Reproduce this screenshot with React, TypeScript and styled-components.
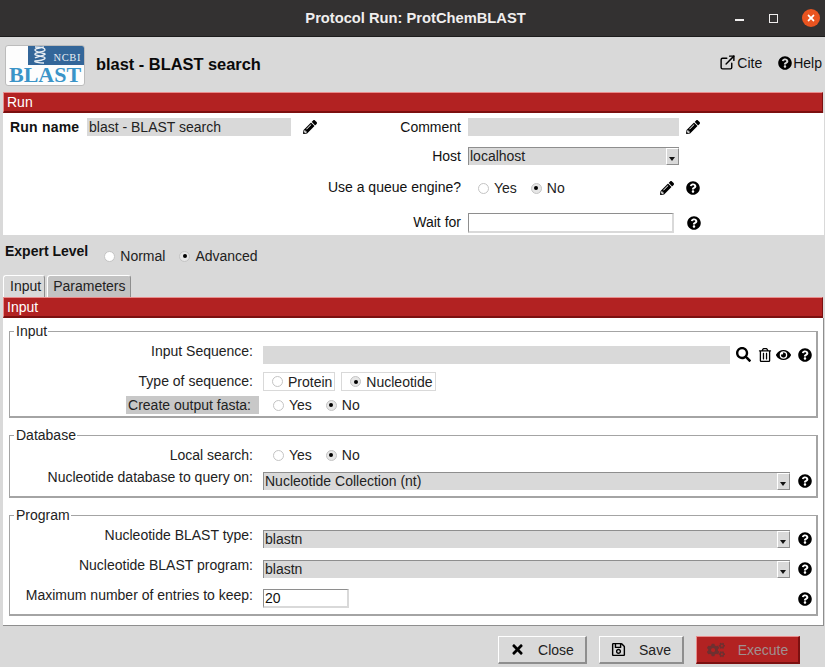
import React from "react";
import styled, { createGlobalStyle } from "styled-components";
import {
  FaPencilAlt,
  FaQuestionCircle,
  FaSearch,
  FaRegTrashAlt,
  FaEye,
  FaTimes,
  FaRegSave,
  FaCogs,
} from "react-icons/fa";
import { ExternalLink } from "lucide-react";

const GlobalStyle = createGlobalStyle`
  html, body { margin: 0; padding: 0; background: #d9d9d9; }
  * { box-sizing: border-box; }
  body { font-family: "Liberation Sans", Arial, sans-serif; font-size: 14px; color: #111; }
`;

const Window = styled.div`
  width: 825px;
  height: 667px;
  overflow: hidden;
  background: #d9d9d9;
`;

const TitleBar = styled.div`
  height: 37px;
  padding-left: 6px;
  background: #333131;
  border-bottom: 1px solid #1d1c1c;
  color: #f0eeee;
  font-weight: bold;
  font-size: 14.7px;
  display: flex;
  align-items: center;
  justify-content: center;
  position: relative;
`;

const WindowButtons = styled.div`
  position: absolute;
  right: 5px;
  top: 9px;
  display: flex;
  align-items: center;
`;

const MinButton = styled.span`
  width: 9px;
  height: 2px;
  background: #f0eeee;
  margin: 4px 25px 0 0;
`;

const MaxButton = styled.span`
  width: 9px;
  height: 9px;
  border: 1px solid #f0eeee;
  margin-right: 24px;
`;

const CloseCircle = styled.span`
  width: 18px;
  height: 18px;
  border-radius: 50%;
  background: #e95420;
  display: flex;
  align-items: center;
  justify-content: center;
`;

const Header = styled.div`
  height: 55px;
  display: flex;
  align-items: center;
  padding: 0 3px 0 5px;
`;

const Logo = styled.div`
  width: 80px;
  height: 41px;
  background: #fdfdfd;
  border: 1px solid #bcbcbc;
  border-radius: 3px;
  position: relative;
  margin: 1px 11px 0 0;
  overflow: hidden;
  flex: none;
`;

const LogoBand = styled.div`
  position: absolute;
  left: 22px;
  top: 0;
  right: 0;
  height: 19px;
  background: #336699;
  display: flex;
  align-items: flex-end;
  justify-content: space-between;
  padding: 0 3px 1px 4px;
  color: #e8eef4;
  font-family: "Liberation Serif", serif;
  font-size: 10.5px;
  line-height: 12px;
  letter-spacing: 0.6px;
`;

const LogoWord = styled.div`
  position: absolute;
  left: 3px;
  top: 18px;
  color: #3a94c8;
  font-family: "Liberation Serif", serif;
  font-weight: bold;
  font-size: 22px;
  line-height: 22px;
`;

const ProtocolTitle = styled.div`
  flex: 1;
  font-weight: bold;
  font-size: 16.4px;
  color: #0a0a0a;
`;

const HeaderLink = styled.div`
  display: flex;
  align-items: center;
  gap: 1px;
  margin-left: 16px;
  margin-top: -4px;
`;

const RedBar = styled.div`
  height: 21px;
  width: 820px;
  margin-left: 3px;
  background: #b22222;
  border-top: 1px solid #e98d8d;
  border-left: 1px solid #e98d8d;
  border-bottom: 2px solid #7c1010;
  border-right: 1px solid #7c1010;
  color: #fff;
  line-height: 18px;
  padding-left: 3px;
`;

const RunPanel = styled.div`
  height: 122px;
  width: 821px;
  margin-left: 3px;
  background: #fff;
  display: flex;
`;

const RunLeft = styled.div`
  width: 378px;
  padding: 5px 0 0 7px;
  display: flex;
  align-items: flex-start;
`;

const RunNameLabel = styled.span`
  font-weight: bold;
  width: 77px;
  line-height: 18px;
  letter-spacing: 0.2px;
  flex: none;
`;

const RunRight = styled.div`
  flex: 1;
  padding-top: 5px;
  display: flex;
  flex-direction: column;
`;

const RunRow = styled.div<{ $height: number }>`
  height: ${(p) => p.$height}px;
  display: flex;
  align-items: flex-start;
`;

const RunLabel = styled.span`
  width: 80px;
  flex: none;
  margin-right: 7px;
  display: flex;
  justify-content: flex-end;
  line-height: 18px;
  white-space: nowrap;
`;

const GrayInput = styled.div<{ $width: number }>`
  height: 18px;
  width: ${(p) => p.$width}px;
  flex: none;
  background: #d9d9d9;
  line-height: 18px;
  padding-left: 2px;
  color: #222;
`;

const EntryBox = styled.div<{ $width: number; $height: number }>`
  width: ${(p) => p.$width}px;
  height: ${(p) => p.$height}px;
  background: #fff;
  border-top: 1px solid #8e8e8e;
  border-left: 1px solid #8e8e8e;
  border-right: 2px solid #d9d9d9;
  border-bottom: 2px solid #d9d9d9;
  line-height: 17px;
  padding-left: 1px;
  flex: none;
`;

const Select = styled.div<{ $width: number }>`
  width: ${(p) => p.$width}px;
  height: 18px;
  background: #d9d9d9;
  border-top: 1px solid #8e8e8e;
  border-left: 1px solid #8e8e8e;
  display: flex;
  justify-content: space-between;
  flex: none;
  line-height: 17px;
  padding-left: 1px;
  color: #222;
`;

const SelectArrow = styled.span`
  width: 13px;
  height: 17px;
  background: #d9d9d9;
  border-top: 1px solid #fff;
  border-left: 1px solid #fff;
  border-right: 1px solid #8e8e8e;
  border-bottom: 1px solid #8e8e8e;
  position: relative;
  &::after {
    content: "";
    position: absolute;
    left: 2px;
    top: 8px;
    border-left: 3.5px solid transparent;
    border-right: 3.5px solid transparent;
    border-top: 4px solid #111;
  }
`;

const IconButton = styled.span<{ $left?: number; $top?: number }>`
  display: inline-flex;
  align-items: center;
  justify-content: center;
  width: 15px;
  height: 15px;
  flex: none;
  margin-left: ${(p) => p.$left ?? 0}px;
  margin-top: ${(p) => p.$top ?? 0}px;
  color: #000;
`;

const RadioGroup = styled.div<{ $left?: number; $top?: number }>`
  display: flex;
  align-items: center;
  height: 18px;
  margin-left: ${(p) => p.$left ?? 0}px;
  margin-top: ${(p) => p.$top ?? 0}px;
`;

const RadioItem = styled.span<{ $gap?: number }>`
  display: inline-flex;
  align-items: center;
  gap: 5px;
  margin-right: ${(p) => p.$gap ?? 14}px;
  color: #222;
`;

const RadioDot = styled.span<{ $on?: boolean }>`
  width: 11px;
  height: 11px;
  border-radius: 50%;
  border: 1px solid #c4c4c4;
  background: ${(p) => (p.$on ? "#e6e6e6" : "#fff")};
  position: relative;
  flex: none;
  &::after {
    content: "";
    display: ${(p) => (p.$on ? "block" : "none")};
    position: absolute;
    left: 2.5px;
    top: 2.5px;
    width: 4px;
    height: 4px;
    border-radius: 50%;
    background: #000;
  }
`;

const ExpertRow = styled.div`
  height: 38px;
  display: flex;
  align-items: flex-start;
  padding: 8px 0 0 5px;
`;

const ExpertLabel = styled.span`
  font-weight: bold;
  line-height: 17px;
  margin-right: 13px;
`;

const TabRow = styled.div`
  height: 24px;
  display: flex;
  gap: 2px;
  padding-left: 3px;
  align-items: flex-end;
`;

const Tab = styled.div<{ $active?: boolean }>`
  height: 22px;
  background: ${(p) => (p.$active ? "#d9d9d9" : "#c3c3c3")};
  border: 1px solid #8e8e8e;
  border-top-color: #fff;
  border-left-color: #fff;
  border-bottom: none;
  border-radius: 3px 3px 0 0;
  padding: ${(p) => (p.$active ? "0 3px 0 6px" : "0 4px 0 5px")};
  line-height: 20px;
  color: #222;
`;

const MainPanel = styled.div`
  margin-left: 3px;
  width: 821px;
  height: 308px;
  background: #fff;
  border-right: 1px solid #8e8e8e;
  border-bottom: 1px solid #8e8e8e;
  padding: 5px 0 0 6px;
  display: flex;
  flex-direction: column;
  gap: 9px;
`;

const Group = styled.fieldset<{ $height: number; $pad: number }>`
  margin: 0;
  flex: none;
  width: 809px;
  height: ${(p) => p.$height}px;
  padding: ${(p) => p.$pad}px 0 0;
  border: 1px solid #a4a4a4;
  border-right-width: 2px;
  border-bottom-width: 2px;
  border-radius: 0;
  min-width: 0;
`;

const GroupLegend = styled.legend`
  margin-left: 4px;
  padding: 0 1px 0 2px;
  line-height: 16px;
  color: #222;
`;

const FieldRow = styled.div<{ $height: number }>`
  height: ${(p) => p.$height}px;
  display: flex;
  align-items: flex-start;
`;

const FieldLabel = styled.div<{ $offset?: number }>`
  width: 243px;
  flex: none;
  margin-right: 10px;
  margin-top: ${(p) => p.$offset ?? 0}px;
  display: flex;
  justify-content: flex-end;
  line-height: 16px;
  color: #222;
  white-space: nowrap;
`;

const Highlighted = styled.span`
  background: #c8c8c8;
  padding: 1px 8px 1px 2px;
  margin-right: -6px;
  line-height: 16px;
`;

const BoxedRadio = styled.span`
  display: inline-flex;
  align-items: center;
  gap: 5px;
  height: 19px;
  padding: 0 2px 0 8px;
  border: 1px solid #d9d9d9;
  margin-right: 6px;
  color: #222;
`;

const Footer = styled.div`
  display: flex;
  justify-content: flex-end;
  gap: 12px;
  padding: 10px 25px 0 0;
`;

const ActionButton = styled.div<{ $width: number; $danger?: boolean }>`
  width: ${(p) => p.$width}px;
  height: 28px;
  display: flex;
  align-items: center;
  justify-content: center;
  gap: 13px;
  background: ${(p) => (p.$danger ? "#b22222" : "#d9d9d9")};
  color: ${(p) => (p.$danger ? "#a09090" : "#222")};
  border-style: solid;
  border-width: 1px 2px 2px 1px;
  border-color: ${(p) =>
    p.$danger ? "#e98d8d #7c1010 #7c1010 #e98d8d" : "#fff #8e8e8e #8e8e8e #fff"};
`;

const Help = ({ left, top }: { left?: number; top?: number }) => (
  <IconButton $left={left} $top={top}>
    <FaQuestionCircle size={14} />
  </IconButton>
);

const Pencil = ({ left, top }: { left?: number; top?: number }) => (
  <IconButton $left={left} $top={top}>
    <FaPencilAlt size={14} />
  </IconButton>
);

const Radio = ({ label, on, gap }: { label: string; on?: boolean; gap?: number }) => (
  <RadioItem $gap={gap}>
    <RadioDot $on={on} />
    {label}
  </RadioItem>
);

const App = () => {
  return (
    <Window>
      <GlobalStyle />
      <TitleBar>
        Protocol Run: ProtChemBLAST
        <WindowButtons>
          <MinButton />
          <MaxButton />
          <CloseCircle>
            <FaTimes size={10} color="#fff" />
          </CloseCircle>
        </WindowButtons>
      </TitleBar>

      <Header>
        <Logo>
          <LogoBand>
            <svg width="15" height="18" viewBox="0 0 15 18">
              <path
                d="M3 1c6 0 10 1 10 3s-9 2-10 4 10 2 10 4-7 3-10 3c-1 1 4 2 9 2M12 1C8 2 3 2 3 4s9 3 10 4-9 3-10 4"
                stroke="#e8eef4"
                strokeWidth="1.4"
                fill="none"
              />
            </svg>
            NCBI
          </LogoBand>
          <LogoWord>BLAST</LogoWord>
        </Logo>
        <ProtocolTitle>blast - BLAST search</ProtocolTitle>
        <HeaderLink>
          <ExternalLink size={17} strokeWidth={2} color="#000" />
          Cite
        </HeaderLink>
        <HeaderLink>
          <FaQuestionCircle size={14} color="#000" />
          Help
        </HeaderLink>
      </Header>

      <RedBar>Run</RedBar>
      <RunPanel>
        <RunLeft>
          <RunNameLabel>Run name</RunNameLabel>
          <GrayInput $width={204}>blast - BLAST search</GrayInput>
          <Pencil left={11} top={1} />
        </RunLeft>
        <RunRight>
          <RunRow $height={29}>
            <RunLabel>Comment</RunLabel>
            <GrayInput $width={211} />
            <Pencil left={6} top={1} />
          </RunRow>
          <RunRow $height={31}>
            <RunLabel>Host</RunLabel>
            <Select $width={211}>
              localhost
              <SelectArrow />
            </Select>
          </RunRow>
          <RunRow $height={35}>
            <RunLabel>Use a queue engine?</RunLabel>
            <RadioGroup $left={10} $top={1}>
              <Radio label="Yes" />
              <Radio label="No" on />
            </RadioGroup>
            <Pencil left={81} top={2} />
            <Help left={11} top={2} />
          </RunRow>
          <RunRow $height={22}>
            <RunLabel>Wait for</RunLabel>
            <EntryBox $width={206} $height={20} />
            <Help left={12} top={2} />
          </RunRow>
        </RunRight>
      </RunPanel>

      <ExpertRow>
        <ExpertLabel>Expert Level</ExpertLabel>
        <RadioGroup $left={3} $top={4}>
          <Radio label="Normal" />
          <Radio label="Advanced" on />
        </RadioGroup>
      </ExpertRow>

      <TabRow>
        <Tab $active>Input</Tab>
        <Tab>Parameters</Tab>
      </TabRow>
      <RedBar>Input</RedBar>

      <MainPanel>
        <Group $height={95} $pad={7}>
          <GroupLegend>Input</GroupLegend>
          <FieldRow $height={26}>
            <FieldLabel $offset={-3}>Input Sequence:</FieldLabel>
            <GrayInput $width={467} />
            <IconButton $left={6} $top={1}>
              <FaSearch size={15} />
            </IconButton>
            <IconButton $left={6} $top={1}>
              <FaRegTrashAlt size={14} />
            </IconButton>
            <IconButton $left={4} $top={1}>
              <FaEye size={16} />
            </IconButton>
            <Help left={6} top={1} />
          </FieldRow>
          <FieldRow $height={24}>
            <FieldLabel $offset={1}>Type of sequence:</FieldLabel>
            <BoxedRadio>
              <RadioDot />
              Protein
            </BoxedRadio>
            <BoxedRadio>
              <RadioDot $on />
              Nucleotide
            </BoxedRadio>
          </FieldRow>
          <FieldRow $height={18}>
            <FieldLabel>
              <Highlighted>Create output fasta:</Highlighted>
            </FieldLabel>
            <RadioGroup $left={10}>
              <Radio label="Yes" />
              <Radio label="No" on />
            </RadioGroup>
          </FieldRow>
        </Group>

        <Group $height={71} $pad={3}>
          <GroupLegend>Database</GroupLegend>
          <FieldRow $height={26}>
            <FieldLabel $offset={1}>Local search:</FieldLabel>
            <RadioGroup $left={10}>
              <Radio label="Yes" />
              <Radio label="No" on />
            </RadioGroup>
          </FieldRow>
          <FieldRow $height={22}>
            <FieldLabel $offset={-3}>Nucleotide database to query on:</FieldLabel>
            <Select $width={527}>
              Nucleotide Collection (nt)
              <SelectArrow />
            </Select>
            <Help left={7} top={1} />
          </FieldRow>
        </Group>

        <Group $height={109} $pad={7}>
          <GroupLegend>Program</GroupLegend>
          <FieldRow $height={30}>
            <FieldLabel $offset={-3}>Nucleotide BLAST type:</FieldLabel>
            <Select $width={527}>
              blastn
              <SelectArrow />
            </Select>
            <Help left={7} top={1} />
          </FieldRow>
          <FieldRow $height={29}>
            <FieldLabel $offset={-3}>Nucleotide BLAST program:</FieldLabel>
            <Select $width={527}>
              blastn
              <SelectArrow />
            </Select>
            <Help left={7} top={1} />
          </FieldRow>
          <FieldRow $height={24}>
            <FieldLabel $offset={-2}>Maximum number of entries to keep:</FieldLabel>
            <EntryBox $width={86} $height={19}>
              20
            </EntryBox>
            <Help left={448} top={2} />
          </FieldRow>
        </Group>
      </MainPanel>

      <Footer>
        <ActionButton $width={89}>
          <FaTimes size={15} color="#000" />
          Close
        </ActionButton>
        <ActionButton $width={85}>
          <FaRegSave size={15} color="#000" />
          Save
        </ActionButton>
        <ActionButton $width={104} $danger>
          <FaCogs size={18} color="#6e3030" />
          Execute
        </ActionButton>
      </Footer>
    </Window>
  );
};

export default App;
